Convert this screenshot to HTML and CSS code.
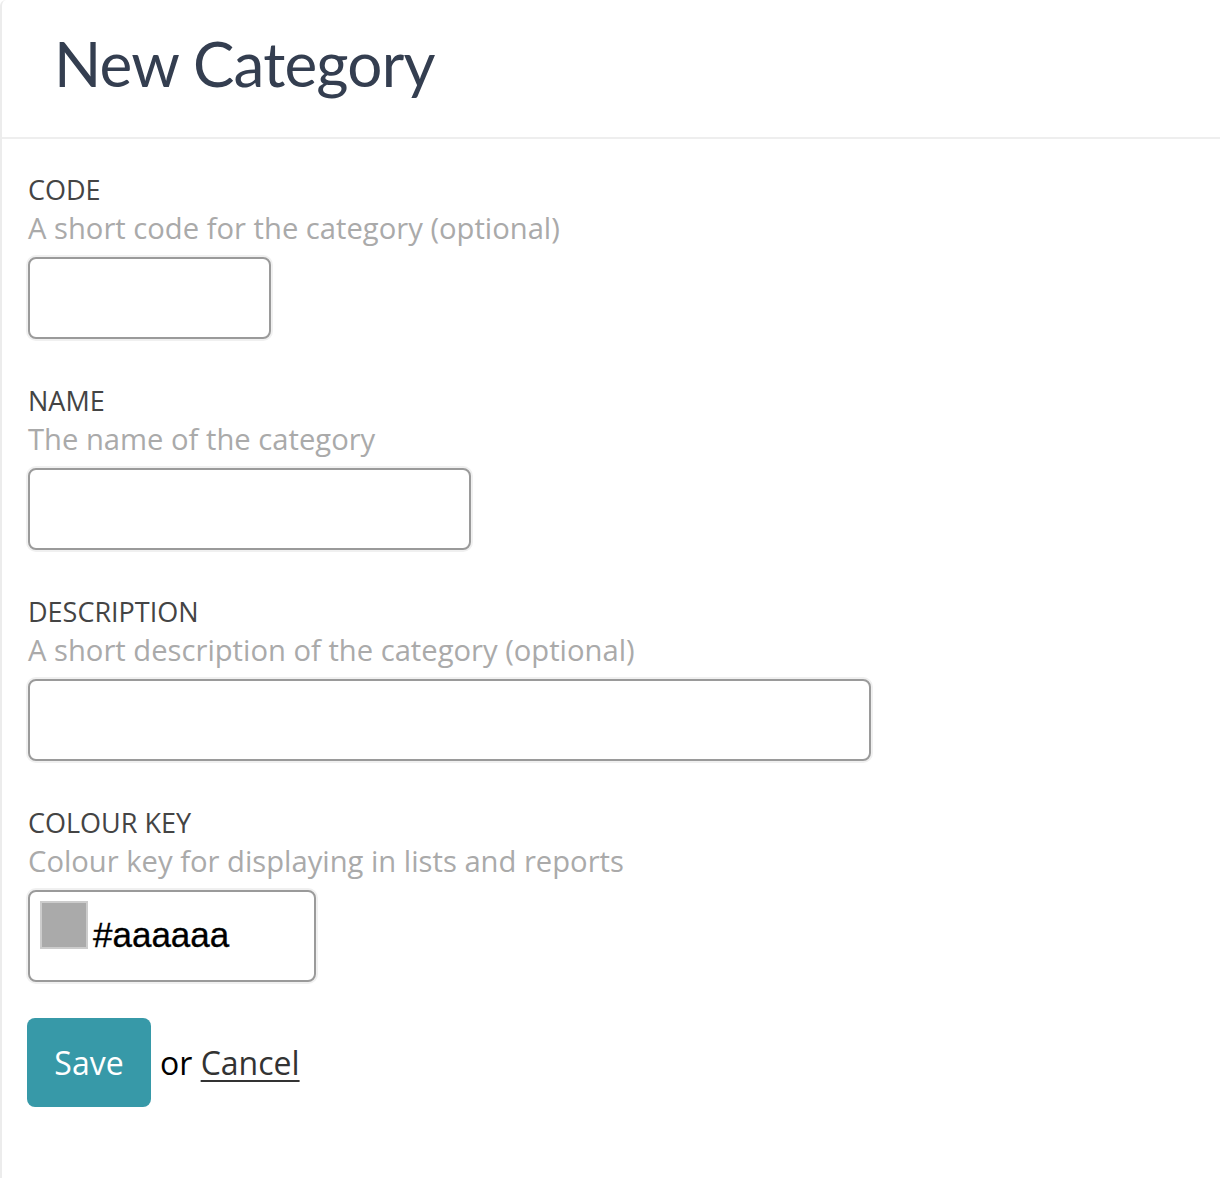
FILE: index.html
```html
<!DOCTYPE html>
<html lang="en">
<head>
<meta charset="utf-8">
<title>New Category</title>
<link rel="stylesheet" href="styles.css">
</head>
<body>
<div class="panel">
  <div class="panel-header">
    <h1 class="title">New Category</h1>
  </div>
  <form class="form">
    <div class="field">
      <div class="label">CODE</div>
      <div class="hint">A short code for the category (optional)</div>
      <div class="input input-code"></div>
    </div>
    <div class="field">
      <div class="label">NAME</div>
      <div class="hint">The name of the category</div>
      <div class="input input-name"></div>
    </div>
    <div class="field">
      <div class="label">DESCRIPTION</div>
      <div class="hint">A short description of the category (optional)</div>
      <div class="input input-desc"></div>
    </div>
    <div class="field field-last">
      <div class="label">COLOUR KEY</div>
      <div class="hint">Colour key for displaying in lists and reports</div>
      <div class="input input-colour">
        <span class="swatch"></span><span class="colour-value">#aaaaaa</span>
      </div>
    </div>
    <div class="actions">
      <span class="btn-save">Save</span>
      <span class="or">or <a class="cancel" href="#">Cancel</a></span>
    </div>
  </form>
</div>
</body>
</html>
```
FILE: styles.css
```css
html, body {
  margin: 0;
  padding: 0;
  background: #ffffff;
}

.panel {
  min-height: 1178px;
  border-left: 2px solid #ececec;
  border-top-left-radius: 6px;
  box-sizing: border-box;
}

.panel-header {
  height: 137px;
  border-bottom: 2px solid #eeeeee;
  padding-left: 52px;
  box-sizing: content-box;
}

.title {
  margin: 0;
  font-family: Lato, "Open Sans", sans-serif;
  font-weight: 400;
  font-size: 62px;
  line-height: 127px;
  letter-spacing: -0.8px;
  color: #343e50;
}

.form {
  margin: 0;
  padding: 32px 0 0 25px;
  font-family: "Open Sans", sans-serif;
}

.field {
  margin-bottom: 43px;
}

.field-last {
  margin-bottom: 36px;
}

.label {
  font-size: 27px;
  line-height: 38px;
  color: #444444;
  padding-left: 1px;
}

.hint {
  font-size: 29.2px;
  line-height: 38px;
  color: #aaaaaa;
  padding-left: 1px;
}

.input {
  margin: 10px 0 0 1px;
  height: 78px;
  border: 2px solid #9a9a9a;
  border-radius: 8px;
  box-shadow: 0 0 0 2px #f0f0f0;
  background: #ffffff;
}

.input-code { width: 239px; }
.input-name { width: 439px; }
.input-desc { width: 839px; }

.input-colour {
  display: flex;
  align-items: flex-start;
  padding: 9px 0 0 10px;
  box-sizing: border-box;
  height: 92px;
  width: 288px;
}

.swatch {
  width: 44px;
  height: 44px;
  border: 2px solid #cccccc;
  background: #aaaaaa;
  flex: none;
}

.colour-value {
  font-family: "Liberation Sans", Arial, sans-serif;
  font-size: 35px;
  line-height: 35px;
  color: #000000;
  margin-left: 5px;
  margin-top: 16px;
  -webkit-text-stroke: 0.3px #000000;
}

.actions {
  display: flex;
  align-items: center;
  gap: 9px;
}

.btn-save {
  display: inline-flex;
  align-items: center;
  justify-content: center;
  width: 124px;
  height: 89px;
  border-radius: 8px;
  background: #3799a8;
  color: #ffffff;
  font-size: 32px;
}

.or {
  font-size: 32px;
  color: #000000;
}

.cancel {
  color: #333333;
  text-decoration: underline;
  text-underline-offset: 5px;
  text-decoration-thickness: 2px;
}
```
